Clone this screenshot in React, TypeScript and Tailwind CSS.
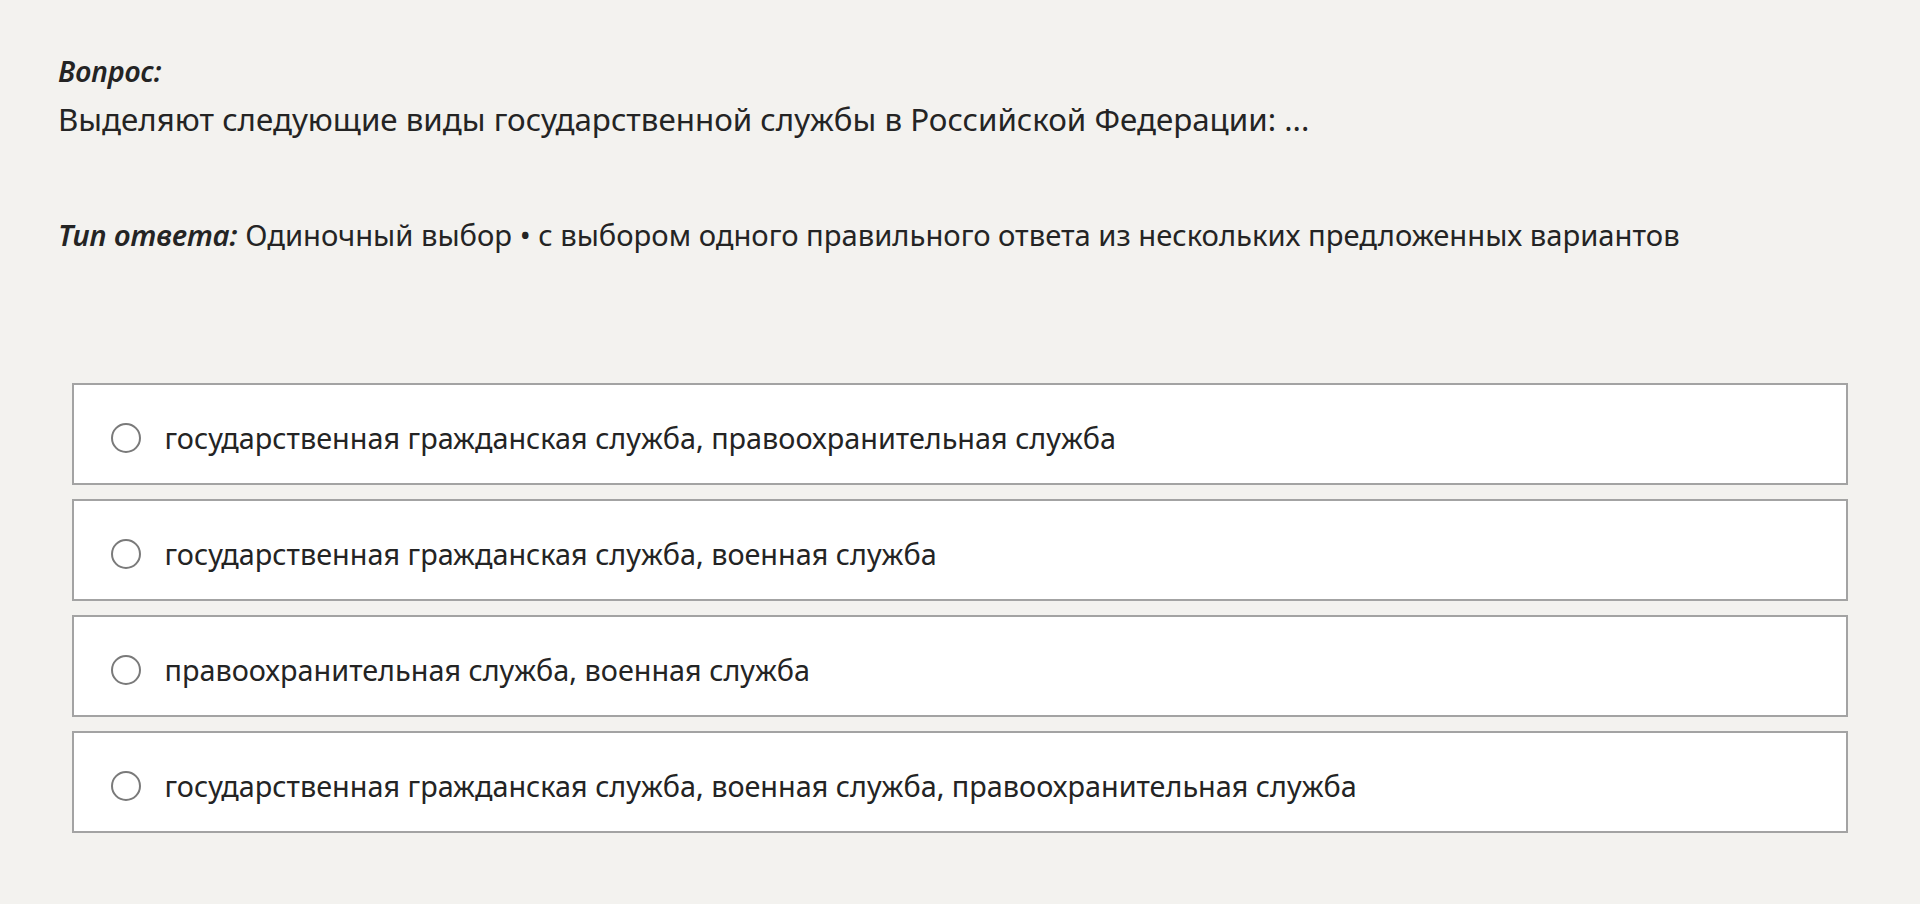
import React from "react";

const options = [
  "государственная гражданская служба, правоохранительная служба",
  "государственная гражданская служба, военная служба",
  "правоохранительная служба, военная служба",
  "государственная гражданская служба, военная служба, правоохранительная служба",
];

export default function App() {
  return (
    <div
      className="min-h-[904px] w-full bg-[#f3f2ef] px-[58px] pt-[53px] text-[#242424]"
      style={{ fontFamily: '"Noto Sans", "Open Sans", sans-serif' }}
    >
      <div className="text-[28.4px] font-semibold italic leading-[36px]">Вопрос:</div>
      <div className="mt-[5px] text-[31.3px] leading-[50px]">
        Выделяют следующие виды государственной службы в Российской Федерации: ...
      </div>
      <div className="mt-[71px] text-[29.2px] leading-[40px]">
        <span className="font-semibold italic">Тип ответа:</span> Одиночный выбор • с выбором одного
        правильного ответа из нескольких предложенных вариантов
      </div>
      <div className="mx-[14px] mt-[128px] flex flex-col gap-[14px]">
        {options.map((o) => (
          <label
            key={o}
            className="flex h-[102px] items-center border-2 border-[#a3a3a3] bg-white pl-[37px] pt-[8px]"
          >
            <span className="h-[30px] w-[30px] shrink-0 rounded-full border-2 border-[#7a7a7a] bg-white" />
            <span className="ml-[23.5px] text-[28.8px] leading-[36px]">{o}</span>
          </label>
        ))}
      </div>
    </div>
  );
}
